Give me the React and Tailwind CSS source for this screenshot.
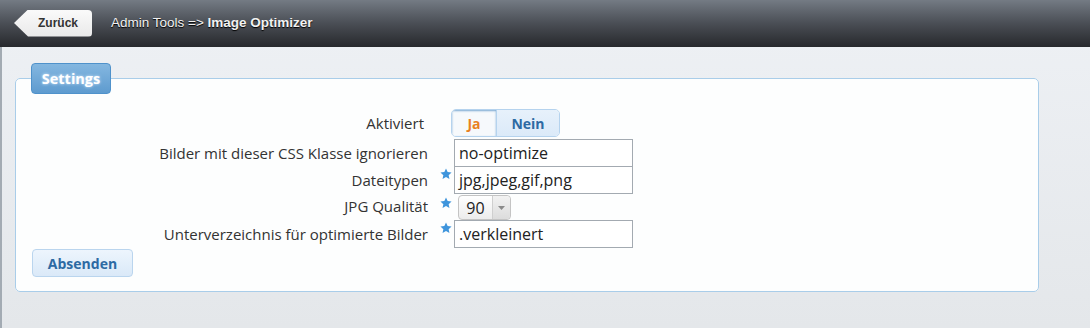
import React from "react";

function Star() {
  return (
    <svg width="12" height="12" viewBox="0 0 24 24" className="block">
      <path
        d="M12 1l3.3 7.2 7.8.9-5.8 5.3 1.6 7.7L12 18.2l-6.9 3.9 1.6-7.7L.9 9.1l7.8-.9z"
        fill="#3f95dc"
      />
    </svg>
  );
}

function Row({ label, star, children, labelClass = "leading-[28px]" }) {
  return (
    <div className="flex items-start">
      <div
        className={`w-[412px] shrink-0 text-right text-[15px] text-[#333] ${labelClass}`}
      >
        {label}
      </div>
      <div className="w-[26px] shrink-0 pl-[12px] pt-[2px]">{star && <Star />}</div>
      {children}
    </div>
  );
}

function TextInput({ value }) {
  return (
    <div className="w-[179px] h-[28px] border border-[#a3aab1] bg-white pl-[4px] text-[16px] leading-[26px] text-[#222]">
      {value}
    </div>
  );
}

export default function App() {
  return (
    <div
      className="w-[1090px] h-[328px] flex flex-col overflow-hidden bg-gradient-to-b from-[#eef1f5] to-[#e4e7ea]"
      style={{ fontFamily: '"Open Sans", sans-serif' }}
    >
      <header className="h-[47px] shrink-0 flex items-center bg-gradient-to-b from-[#747b84] via-[#4a4e55] to-[#27292d] pl-[14px]">
        <button
          className="relative h-[27px] w-[78px] pl-[10px] rounded-r-[4px] bg-gradient-to-b from-[#fafafa] to-[#e9e9e9] text-[12px] font-bold text-[#333] mt-[-1px]"
          style={{
            fontFamily: '"Liberation Sans", Arial, sans-serif',
            clipPath: "polygon(14px 0, 100% 0, 100% 100%, 14px 100%, 0 50%)",
          }}
        >
          Zurück
        </button>
        <div
          className="ml-[19px] text-[13.5px] text-[#f2f2f2] [text-shadow:0_1px_1px_#000]"
          style={{ fontFamily: '"Liberation Sans", Arial, sans-serif' }}
        >
          Admin Tools =&gt; <span className="font-bold">Image Optimizer</span>
        </div>
      </header>

      <div className="flex-1 border-l-2 border-[#a3abb3] pl-[13px] pt-[16px]">
        <fieldset className="w-[1024px] h-[229px] border border-[#a9cde9] rounded-[5px] bg-[#fdfefe] px-[15px]">
          <legend className="h-[31px] w-[80px] rounded-[4px] border border-[#4f92cb] bg-gradient-to-b from-[#84b7e0] to-[#5e9bcf]">
            <div className="flex h-full items-center justify-center text-[14.5px] font-bold text-white [text-shadow:0_0_3px_#d8ecff]">
              Settings
            </div>
          </legend>

          <div className="-ml-[15px] mt-[15px] flex flex-col">
            <Row label="Aktiviert" labelClass="pr-[4px] leading-[28px]">
              <div className="-ml-[3px] flex h-[28px] rounded-[5px] border border-[#b5d3ee] overflow-hidden text-[14px] font-bold">
                <div className="w-[45px] flex items-center justify-center border-r border-[#b5d3ee] bg-[#f6f9fc] text-[#e9811f] shadow-[inset_0_1px_2px_#7aa8d2]">
                  Ja
                </div>
                <div className="w-[62px] flex items-center justify-center bg-gradient-to-b from-[#e7f1fb] to-[#dbeaf9] text-[#2d6aa3]">
                  Nein
                </div>
              </div>
            </Row>
            <div className="mt-[2px]">
              <Row label="Bilder mit dieser CSS Klasse ignorieren">
                <TextInput value="no-optimize" />
              </Row>
            </div>
            <div className="-mt-px">
              <Row label="Dateitypen" star>
                <TextInput value="jpg,jpeg,gif,png" />
              </Row>
            </div>
            <div className="mt-[1px]">
              <Row label="JPG Qualität" star labelClass="leading-[22px]">
                <div className="ml-[4px] flex h-[25px] w-[53px] rounded-[4px] border border-[#c4c4c4] bg-gradient-to-b from-[#ffffff] to-[#ececec] text-[16px] text-[#222]">
                  <div className="flex-1 flex items-center justify-center">90</div>
                  <div className="w-[18px] flex items-center justify-center border-l border-[#cfcfcf] bg-gradient-to-b from-[#f2f2f2] to-[#dcdcdc] rounded-r-[4px]">
                    <svg width="7" height="4" viewBox="0 0 7 4">
                      <path d="M0 0h7L3.5 4z" fill="#8a8a8a" />
                    </svg>
                  </div>
                </div>
              </Row>
            </div>
            <div>
              <Row label="Unterverzeichnis für optimierte Bilder" star>
                <TextInput value=".verkleinert" />
              </Row>
            </div>
            <div className="mt-[1px] pl-[16px]">
              <button className="h-[28px] w-[101px] rounded-[4px] border border-[#bad5ee] bg-gradient-to-b from-[#edf5fd] to-[#dae9f8] text-[14px] font-bold text-[#2d6aa3]">
                Absenden
              </button>
            </div>
          </div>
        </fieldset>
      </div>
    </div>
  );
}
